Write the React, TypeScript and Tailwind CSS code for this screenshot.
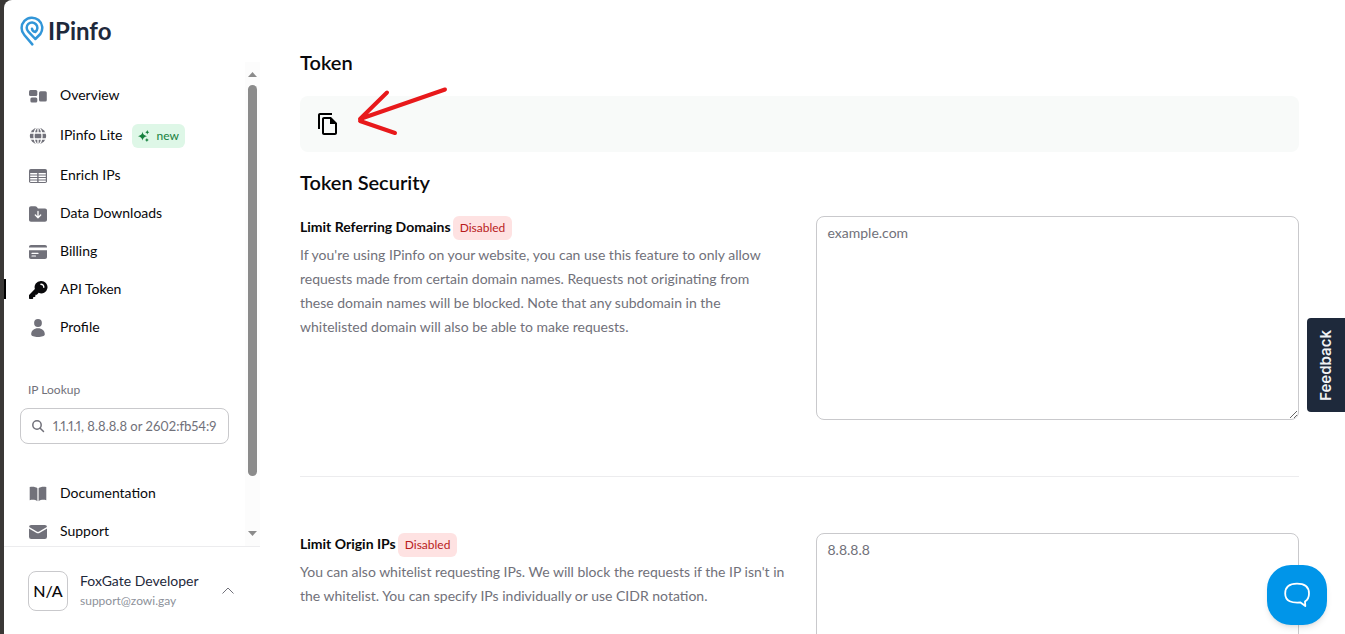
import type { ReactNode } from "react";
import clsx from "clsx";

function LogoMark() {
  return (
    <svg width="24" height="30" viewBox="0 0 72 90" fill="none" aria-hidden="true">
      <path
        d="M37 85L13 57A31 31 0 1 1 61 54L46 69L25 47A16 16 0 1 1 46 48Q37 47 36 38"
        stroke="#3296d8"
        strokeWidth="7.5"
        strokeLinecap="round"
        strokeLinejoin="round"
      />
    </svg>
  );
}

function Icon({ children }: { children: ReactNode }) {
  return (
    <svg
      width="20"
      height="20"
      viewBox="0 0 20 20"
      fill="currentColor"
      className="shrink-0"
      aria-hidden="true"
    >
      {children}
    </svg>
  );
}

const icons = {
  overview: (
    <Icon>
      <rect x="1" y="4" width="8.3" height="6" rx="1.5" />
      <rect x="2.4" y="11.4" width="6.9" height="5" rx="1.5" />
      <rect x="11" y="5.3" width="7.8" height="10.2" rx="1.5" />
    </Icon>
  ),
  globe: (
    <Icon>
      <circle cx="10" cy="10" r="8.2" />
      <g fill="none" stroke="#fff" strokeWidth="1.3">
        <ellipse cx="10" cy="10" rx="4" ry="8.6" />
        <path d="M1 7h18M1 13h18M10 1v6M10 13v6" />
      </g>
    </Icon>
  ),
  table: (
    <Icon>
      <rect x="1" y="3" width="18" height="14" rx="1.8" />
      <path
        d="M2.2 7.7h7M10.6 7.7h7.2M2.2 10.2h7M10.6 10.2h7.2M2.2 12.7h7M10.6 12.7h7.2M2.2 15.2h7M10.6 15.2h7.2"
        stroke="#fff"
        strokeWidth="1.4"
      />
    </Icon>
  ),
  folder: (
    <Icon>
      <path d="M1 4.2C1 3 1.8 2.2 3 2.2h4.2c.6 0 1 .2 1.4.6L10 4.4h7c1.2 0 2 .8 2 2v9.4c0 1.2-.8 2-2 2H3c-1.2 0-2-.8-2-2z" />
      <path
        d="M10 7.5v6M7.3 11l2.7 2.7 2.7-2.7"
        fill="none"
        stroke="#fff"
        strokeWidth="1.3"
        strokeLinecap="round"
        strokeLinejoin="round"
      />
    </Icon>
  ),
  card: (
    <Icon>
      <path d="M1 5.6V5c0-1.2.8-2 2-2h14c1.2 0 2 .8 2 2v.6zM1 8.2h18V15c0 1.2-.8 2-2 2H3c-1.2 0-2-.8-2-2z" />
      <path d="M4 11.4h6M4 14h3.5" stroke="#fff" strokeWidth="1.2" strokeLinecap="round" />
    </Icon>
  ),
  key: (
    <Icon>
      <path
        fillRule="evenodd"
        d="M12.8 1a6.2 6.2 0 0 0-5.9 8.1L1.3 14.7c-.2.2-.3.4-.3.7V18c0 .6.4 1 1 1h2.2c.5 0 1-.4 1-1v-1h1.2c.5 0 1-.4 1-1v-1.3h1c.3 0 .5-.1.7-.3l1.6-1.6A6.2 6.2 0 1 0 12.8 1zm.2 2.6c-.5 0-.8.3-.8.7s.3.7.7.7c1.3 0 2.2.9 2.2 2.2 0 .4.3.7.7.7s.7-.3.7-.7c0-2.1-1.5-3.6-3.5-3.6z"
      />
    </Icon>
  ),
  user: (
    <Icon>
      <circle cx="10" cy="5" r="3.9" />
      <path d="M3.2 16.2C3.2 12.6 6 10.2 10 10.2s6.8 2.4 6.8 6c0 1.900-3.200 2.700-6.800 2.700s-6.800-.8-6.800-2.700z" />
    </Icon>
  ),
  book: (
    <Icon>
      <path d="M9.4 4.2C7.6 2.7 4.6 2.3 1.7 3v13.2c2.9-.7 5.9-.4 7.7 1.1zM10.6 4.2c1.8-1.5 4.8-1.9 7.7-1.2v13.2c-2.9-.7-5.9-.4-7.7 1.1z" />
    </Icon>
  ),
  mail: (
    <Icon>
      <rect x="1" y="3" width="18" height="14" rx="2.2" />
      <path
        d="M.8 5.6l7.7 4.500c1 .6 2 .6 3 0l7.700-4.500"
        fill="none"
        stroke="#fff"
        strokeWidth="1.3"
      />
    </Icon>
  ),
};

type NavItem = { label: string; icon: ReactNode; active?: boolean; isNew?: boolean };

const mainLinks: NavItem[] = [
  { label: "Overview", icon: icons.overview },
  { label: "IPinfo Lite", icon: icons.globe, isNew: true },
  { label: "Enrich IPs", icon: icons.table },
  { label: "Data Downloads", icon: icons.folder },
  { label: "Billing", icon: icons.card },
  { label: "API Token", icon: icons.key, active: true },
  { label: "Profile", icon: icons.user },
];

const helpLinks: NavItem[] = [
  { label: "Documentation", icon: icons.book },
  { label: "Support", icon: icons.mail },
];

function NewBadge() {
  return (
    <span className="ml-2.5 mt-0.5 flex h-6 items-center gap-1.5 rounded-md bg-[#def7e7] px-1.5 text-xs text-[#15803d]">
      <svg width="12" height="12" viewBox="0 0 12 12" fill="currentColor" aria-hidden="true">
        <path d="M4.5 1.8Q5 5.5 9 6.2Q5 7 4.5 10.6Q4 7 0 6.2Q4 5.5 4.5 1.8zM9.3 0Q9.5 1.8 11.3 2.2Q9.5 2.6 9.3 4.4Q9 2.6 7.3 2.2Q9 1.8 9.3 0zM8.9 8Q9.1 9.7 10.8 10Q9.1 10.3 8.9 12Q8.7 10.3 7 10Q8.7 9.7 8.9 8z" />
      </svg>
      new
    </span>
  );
}

function NavList({ items }: { items: NavItem[] }) {
  return (
    <ul>
      {items.map((item) => (
        <li key={item.label}>
          <a href="#" className={clsx("flex items-center", item.isNew ? "h-[42px]" : "h-[38px]")}>
            <span className={clsx("h-5 w-0.5", item.active && "bg-black")} />
            <span
              className={clsx("ml-[22px] mr-3 pt-0.5", item.active ? "text-[#09090b]" : "text-[#71717a]")}
            >
              {item.icon}
            </span>
            {item.label}
            {item.isNew && <NewBadge />}
          </a>
        </li>
      ))}
    </ul>
  );
}

function Scrollbar() {
  return (
    <div
      className="flex w-[15px] shrink-0 flex-col items-center bg-[#fcfcfc] py-2.5"
      aria-hidden="true"
    >
      <svg width="9" height="5" viewBox="0 0 9 5" fill="#8b8b8b">
        <path d="M0 5L4.5 0L9 5z" />
      </svg>
      <div className="mt-2 h-[391px] w-[9px] rounded-full bg-[#8b8b8b]" />
      <svg className="mt-auto" width="9" height="5" viewBox="0 0 9 5" fill="#8b8b8b">
        <path d="M0 0L4.5 5L9 0z" />
      </svg>
    </div>
  );
}

function Sidebar() {
  return (
    <aside className="flex w-64 shrink-0 flex-col">
      <a
        href="#"
        className="flex h-[62px] shrink-0 items-center gap-1 pl-4 text-2xl font-bold text-[#1e293b]"
      >
        <LogoMark />
        IPinfo
      </a>
      <div className="flex min-h-0 flex-1 border-b border-[#ececee]">
        <nav className="min-w-0 flex-1 overflow-hidden pt-3.5">
          <NavList items={mainLinks} />
          <div className="mb-[30px] mt-9 px-4">
            <label htmlFor="ip-lookup" className="block pl-2 text-xs leading-4 text-[#71717a]">
              IP Lookup
            </label>
            <div className="mt-2.5 flex h-9 items-center gap-2 rounded-lg border border-[#c9c9cc] pl-2.5 pr-[11px]">
              <svg
                width="14"
                height="14"
                viewBox="0 0 14 14"
                fill="none"
                stroke="#71717a"
                strokeWidth="1.5"
                strokeLinecap="round"
                className="shrink-0"
                aria-hidden="true"
              >
                <circle cx="6" cy="6" r="4.2" />
                <path d="M9.2 9.2L12.5 12.5" />
              </svg>
              <input
                id="ip-lookup"
                type="text"
                placeholder="1.1.1.1, 8.8.8.8 or 2602:fb54:9::1"
                className="min-w-0 flex-1 text-[13px] proportional-nums outline-none placeholder:text-[#71717a]"
              />
            </div>
          </div>
          <NavList items={helpLinks} />
        </nav>
        <Scrollbar />
      </div>
      <button
        type="button"
        className="flex h-[87px] shrink-0 items-center gap-3 pl-6 pr-[26px] text-left"
      >
        <span className="flex size-10 items-center justify-center rounded-lg border border-[#c9c9cc] text-base font-medium">
          N/A
        </span>
        <span className="flex-1">
          <span className="block leading-5 text-[#1e293b]">FoxGate Developer</span>
          <span className="block text-xs leading-5 text-[#8d919a]">support@zowi.gay</span>
        </span>
        <svg width="12" height="7" viewBox="0 0 12 7" fill="none" stroke="#71717a" aria-hidden="true">
          <path d="M.5 6.5L6 1L11.5 6.5" />
        </svg>
      </button>
    </aside>
  );
}

function Arrow() {
  return (
    <svg
      className="pointer-events-none absolute -top-2.5 left-14"
      width="94"
      height="52"
      viewBox="0 0 94 52"
      fill="none"
      stroke="#e8191b"
      strokeWidth="4"
      strokeLinecap="round"
      strokeLinejoin="round"
      aria-hidden="true"
    >
      <path d="M89 3.500L4 33L31 6.500M4 35L39 47" />
    </svg>
  );
}

type SettingProps = { id: string; title: string; description: string; placeholder: string };

function Setting({ id, title, description, placeholder }: SettingProps) {
  return (
    <div className="grid grid-cols-2 gap-8">
      <div>
        <div className="flex items-center gap-0.5">
          <label htmlFor={id} className="pb-0.5 font-bold text-[#09090b]">
            {title}
          </label>
          <span className="rounded-md bg-[#fee2e2] px-[7px] text-xs leading-6 text-[#b91c1c]">
            Disabled
          </span>
        </div>
        <p className="-mr-0.5 mt-[3px] leading-6 text-[#71717a]">{description}</p>
      </div>
      <textarea
        id={id}
        placeholder={placeholder}
        className="block h-[204px] w-full rounded-lg border border-[#c9c9cc] px-[11px] py-1.5 leading-5 outline-none placeholder:text-[#71717a]"
      />
    </div>
  );
}

export default function App() {
  return (
    <div className="h-screen overflow-hidden bg-[#3a3836] pl-1 font-['Lato',sans-serif] text-sm text-[#09090b]">
      <div className="flex h-full rounded-tl-lg bg-white">
        <Sidebar />
        <main className="min-w-0 flex-1 overflow-hidden pl-10 pr-[46px] pt-12">
          <h2 className="text-xl font-semibold leading-7">Token</h2>
          <div className="relative mt-5 flex h-14 items-center rounded-lg bg-[#f8faf9] px-4">
            <button type="button" aria-label="Copy token">
              <svg width="24" height="24" viewBox="0 0 24 24" fill="#000">
                <path d="M16 1H4c-1.1 0-2 .9-2 2v14h2V3h12V1zm-1 4H8c-1.1 0-1.99.9-1.99 2L6 21c0 1.1.89 2 1.99 2H19c1.1 0 2-.9 2-2V11l-6-6zM8 21V7h6v5h5v9H8z" />
              </svg>
            </button>
            <Arrow />
          </div>
          <h2 className="mb-5 mt-4 text-xl font-semibold leading-7">Token Security</h2>
          <Setting
            id="referring-domains"
            title="Limit Referring Domains"
            description="If you're using IPinfo on your website, you can use this feature to only allow requests made from certain domain names. Requests not originating from these domain names will be blocked. Note that any subdomain in the whitelisted domain will also be able to make requests."
            placeholder="example.com"
          />
          <hr className="my-14 border-[#ececee]" />
          <Setting
            id="origin-ips"
            title="Limit Origin IPs"
            description="You can also whitelist requesting IPs. We will block the requests if the IP isn't in the whitelist. You can specify IPs individually or use CIDR notation."
            placeholder="8.8.8.8"
          />
        </main>
      </div>
      <button
        type="button"
        className="fixed right-0 top-[318px] flex h-[94px] w-[38px] items-center justify-center rounded-l bg-[#1e293b] font-['Inter',sans-serif] text-[15px] font-semibold text-[#f1f3f5]"
      >
        <span className="rotate-180 [writing-mode:vertical-rl]">Feedback</span>
      </button>
      <button
        type="button"
        aria-label="Open chat"
        className="fixed bottom-[9px] right-[18px] flex size-[60px] items-center justify-center rounded-3xl bg-[#0095e9] shadow-md"
      >
        <svg
          width="28"
          height="28"
          viewBox="0 0 28 28"
          fill="none"
          stroke="#fff"
          strokeWidth="1.8"
          strokeLinejoin="round"
          aria-hidden="true"
        >
          <path d="M22 20.5L22.3 25L17.5 21.5C9 22.2 2.2 20.5 2.2 12.5C2.2 5 7 2.6 14 2.6S26 5 26 12.5C26 16.5 24.5 19 22 20.5z" />
        </svg>
      </button>
    </div>
  );
}
